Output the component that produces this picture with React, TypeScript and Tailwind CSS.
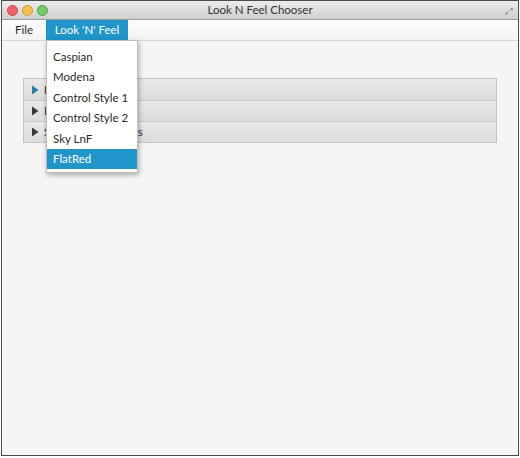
import React from "react";

const menuItems = ["Caspian", "Modena", "Control Style 1", "Control Style 2", "Sky LnF", "FlatRed"];
const panes = ["Introduction", "Buttons", "Styled Components"];

function TrafficLight({ color, ring }: { color: string; ring: string }) {
  return <span className={`block h-[11px] w-[11px] rounded-full border ${ring} ${color}`} />;
}

function Arrow({ active }: { active: boolean }) {
  return (
    <svg width="8" height="10" viewBox="0 0 8 10" className="shrink-0">
      <path d="M1 0.5 L7.5 5 L1 9.5 Z" fill={active ? "#1d7fae" : "#3a3a3a"} />
    </svg>
  );
}

export default function App() {
  return (
    <div className="h-[458px] w-[520px] bg-white font-['Lato',_'DejaVu_Sans',_sans-serif] text-[11.5px] text-[#2a2a2a]">
      <div className="relative ml-px flex h-[456px] w-[518px] flex-col border border-[#4a4a4a]">
        {/* title bar */}
        <div className="relative flex h-[19px] items-center border-b border-[#9a9a9a] bg-gradient-to-b from-[#ececec] to-[#cfcfcf] px-[5px]">
          <div className="flex gap-[4px]">
            <TrafficLight color="bg-[#f0626a]" ring="border-[#c9454c]" />
            <TrafficLight color="bg-[#f6be4f]" ring="border-[#d19a30]" />
            <TrafficLight color="bg-[#74c96a]" ring="border-[#4f9e47]" />
          </div>
          <div className="absolute inset-x-0 top-0 flex h-full items-center justify-center text-[11.5px] text-[#333]">
            Look N Feel Chooser
          </div>
          <div className="ml-auto text-[9px] leading-none text-[#8a8a8a]">⤢</div>
        </div>

        {/* menu bar */}
        <div className="flex h-[21px] items-stretch border-b border-[#d6d6d6] bg-gradient-to-b from-[#fdfdfd] to-[#f2f2f2]">
          <div className="flex items-center px-[13px]">File</div>
          <div className="flex w-[82px] items-center justify-center whitespace-nowrap bg-[#1f95c9] text-white">Look 'N' Feel</div>
        </div>

        {/* content */}
        <div className="flex-1 bg-[#f5f5f3] px-[21px] pt-[37px]">
          <div className="flex flex-col border border-[#c4c4c4]">
            {panes.map((p, i) => (
              <div
                key={p}
                className={`flex h-[21px] items-center gap-[5px] whitespace-nowrap bg-gradient-to-b from-[#e9e9e9] to-[#dcdcdc] pl-[7px] ${i > 0 ? "border-t border-[#c8c8c8]" : ""}`}
              >
                <Arrow active={i === 0} />
                <span>{p}</span>
              </div>
            ))}
          </div>
        </div>

        {/* dropdown menu */}
        <div className="absolute left-[44px] top-[39px] w-[92px] border border-[#bdbdbd] bg-white pb-[3px] pt-[5px] shadow-[1px_2px_5px_rgba(0,0,0,0.3)]">
          {menuItems.map((m) => (
            <div
              key={m}
              className={`flex h-[20.5px] items-center whitespace-nowrap px-[6px] ${m === "FlatRed" ? "bg-[#1f95c9] text-white" : ""}`}
            >
              {m}
            </div>
          ))}
        </div>
      </div>
    </div>
  );
}
